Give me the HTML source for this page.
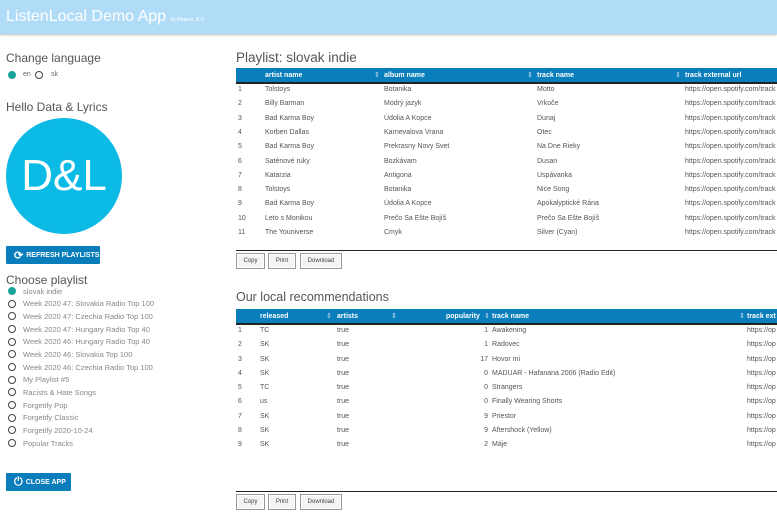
<!DOCTYPE html>
<html><head><meta charset="utf-8"><style>
*{margin:0;padding:0;box-sizing:border-box}
body{width:777px;height:518px;overflow:hidden;background:#fff;font-family:"Liberation Sans",sans-serif;color:#555;position:relative}
.a{position:absolute;white-space:nowrap}
.hdr{left:0;top:0;width:777px;height:34px;background:#b0dcf8;box-shadow:0 1px 2px #bbb}
.h2{font-size:12px;color:#555}
.sm{font-size:7px;color:#666}
.rad{width:8px;height:8px;border-radius:50%;border:1.5px solid #444}
.on{background:#1aa39a;border-color:#1aa39a}
.btn{background:#0a7dbb;color:#fff;font-size:7px;font-weight:bold;display:flex;align-items:center;gap:3px;padding-left:8px;border-radius:1px}
.th{background:#0a7dbb;height:14px}
.tc{font-size:7px;font-weight:bold;color:#fff}
.gb{border:1px solid #999;background:#f4f4f4;font-size:6px;color:#444;height:16px;display:flex;align-items:center;justify-content:center;box-shadow:inset 0 0 0 1px #fff}
.cell{font-size:7px;color:#555}
.ar{font-size:7px;color:#cde}
</style></head><body>
<div class="a hdr"></div>
<div class="a" style="left:6px;top:8px;font-size:16px;color:#fff">ListenLocal Demo App <span style="font-size:5px">by Reprex, B.V.</span></div>

<div class="a h2" style="left:6px;top:51px">Change language</div>
<div class="a rad on" style="left:8px;top:71px"></div><div class="a sm" style="left:23px;top:71px">en</div>
<div class="a rad" style="left:35px;top:71px"></div><div class="a sm" style="left:51px;top:71px">sk</div>
<div class="a h2" style="left:6px;top:100px">Hello Data &amp; Lyrics</div>
<div class="a" style="left:6px;top:118px;width:116px;height:116px;border-radius:50%;background:#0bbbe6;color:#fff;font-size:44px;display:flex;align-items:center;justify-content:center">D&amp;L</div>
<div class="a btn" style="left:6px;top:246px;width:94px;height:18px"><span style="font-size:11px">⟳</span>REFRESH PLAYLISTS</div>
<div class="a h2" style="left:6px;top:273px">Choose playlist</div>
<div id="pl"></div>
<div class="a btn" style="left:6px;top:473px;width:65px;height:18px"><span style="font-size:11px">⏻</span>CLOSE APP</div>

<div class="a h2" style="left:236px;top:50px;font-size:13.5px">Playlist: slovak indie</div>
<div class="a th" style="left:236px;top:68px;width:541px;border-bottom:2px solid #222;height:16px"></div>
<div class="a tc" style="left:265px;top:72px">artist name</div><div class="a ar" style="left:374px;top:71px">⇕</div>
<div class="a tc" style="left:384px;top:72px">album name</div><div class="a ar" style="left:527px;top:71px">⇕</div>
<div class="a tc" style="left:537px;top:72px">track name</div><div class="a ar" style="left:675px;top:71px">⇕</div>
<div class="a tc" style="left:685px;top:72px">track external url</div>
<div id="t1"></div>
<div class="a" style="left:236px;top:250px;width:541px;height:1px;background:#222"></div>
<div class="a gb" style="left:236px;top:253px;width:29px">Copy</div>
<div class="a gb" style="left:268px;top:253px;width:28px">Print</div>
<div class="a gb" style="left:300px;top:253px;width:42px">Download</div>

<div class="a h2" style="left:236px;top:290px;font-size:12.5px">Our local recommendations</div>
<div class="a th" style="left:236px;top:309px;width:541px;border-bottom:2px solid #222;height:16px"></div>
<div class="a tc" style="left:260px;top:313px">released</div><div class="a ar" style="left:326px;top:312px">⇕</div>
<div class="a tc" style="left:337px;top:313px">artists</div><div class="a ar" style="left:391px;top:312px">⇕</div>
<div class="a tc" style="left:446px;top:313px">popularity</div><div class="a ar" style="left:484px;top:312px">⇕</div>
<div class="a tc" style="left:492px;top:313px">track name</div><div class="a ar" style="left:739px;top:312px">⇕</div>
<div class="a tc" style="left:747px;top:313px">track ext</div>
<div id="t2"></div>
<div class="a" style="left:236px;top:491px;width:541px;height:1px;background:#222"></div>
<div class="a gb" style="left:236px;top:494px;width:29px">Copy</div>
<div class="a gb" style="left:268px;top:494px;width:28px">Print</div>
<div class="a gb" style="left:300px;top:494px;width:42px">Download</div>

<script>
var pl=["slovak indie","Week 2020 47: Slovakia Radio Top 100","Week 2020 47: Czechia Radio Top 100","Week 2020 47: Hungary Radio Top 40","Week 2020 46: Hungary Radio Top 40","Week 2020 46: Slovakia Top 100","Week 2020 46: Czechia Radio Top 100","My Playlist #5","Racists & Hate Songs","Forgetify Pop","Forgetify Classic","Forgetify 2020-10-24","Popular Tracks"];
var h="";pl.forEach(function(p,i){var y=287+i*12.67;h+='<div class="a rad'+(i==0?' on':'')+'" style="left:8px;top:'+y+'px"></div><div class="a sm" style="left:23px;top:'+(y-0.5)+'px;color:#888;font-size:7.5px">'+p.replace('&','&amp;')+'</div>';});
document.getElementById('pl').innerHTML=h;
var t1=[["Tolstoys","Botanika","Motto"],["Billy Barman","Modrý jazyk","Vrkoče"],["Bad Karma Boy","Údolia A Kopce","Dunaj"],["Korben Dallas","Karnevalova Vrana","Otec"],["Bad Karma Boy","Prekrasny Novy Svet","Na Dne Rieky"],["Saténové ruky","Bozkávam","Dusan"],["Katarzia","Antigona","Uspávanka"],["Tolstoys","Botanika","Nice Song"],["Bad Karma Boy","Údolia A Kopce","Apokalyptické Rána"],["Leto s Monikou","Prečo Sa Ešte Bojíš","Prečo Sa Ešte Bojíš"],["The Youniverse","Cmyk","Silver (Cyan)"]];
h="";t1.forEach(function(r,i){var y=86+i*14.3;h+='<div class="a cell" style="left:238px;top:'+y+'px">'+(i+1)+'</div><div class="a cell" style="left:265px;top:'+y+'px">'+r[0]+'</div><div class="a cell" style="left:384px;top:'+y+'px">'+r[1]+'</div><div class="a cell" style="left:537px;top:'+y+'px">'+r[2]+'</div><div class="a cell" style="left:685px;top:'+y+'px">https://open.spotify.com/track</div>';});
document.getElementById('t1').innerHTML=h;
var t2=[["TC","1","Awakening"],["SK","1","Radovec"],["SK","17","Hovor mi"],["SK","0","MADUAR - Hafanana 2006 (Radio Edit)"],["TC","0","Strangers"],["us","0","Finally Wearing Shorts"],["SK","9","Priestor"],["SK","9","Aftershock (Yellow)"],["SK","2","Máje"]];
h="";t2.forEach(function(r,i){var y=327+i*14.25;h+='<div class="a cell" style="left:238px;top:'+y+'px">'+(i+1)+'</div><div class="a cell" style="left:260px;top:'+y+'px">'+r[0]+'</div><div class="a cell" style="left:337px;top:'+y+'px">true</div><div class="a cell" style="right:289px;top:'+y+'px">'+r[1]+'</div><div class="a cell" style="left:492px;top:'+y+'px">'+r[2]+'</div><div class="a cell" style="left:747px;top:'+y+'px">https://op</div>';});
document.getElementById('t2').innerHTML=h;
</script>
</body></html>
